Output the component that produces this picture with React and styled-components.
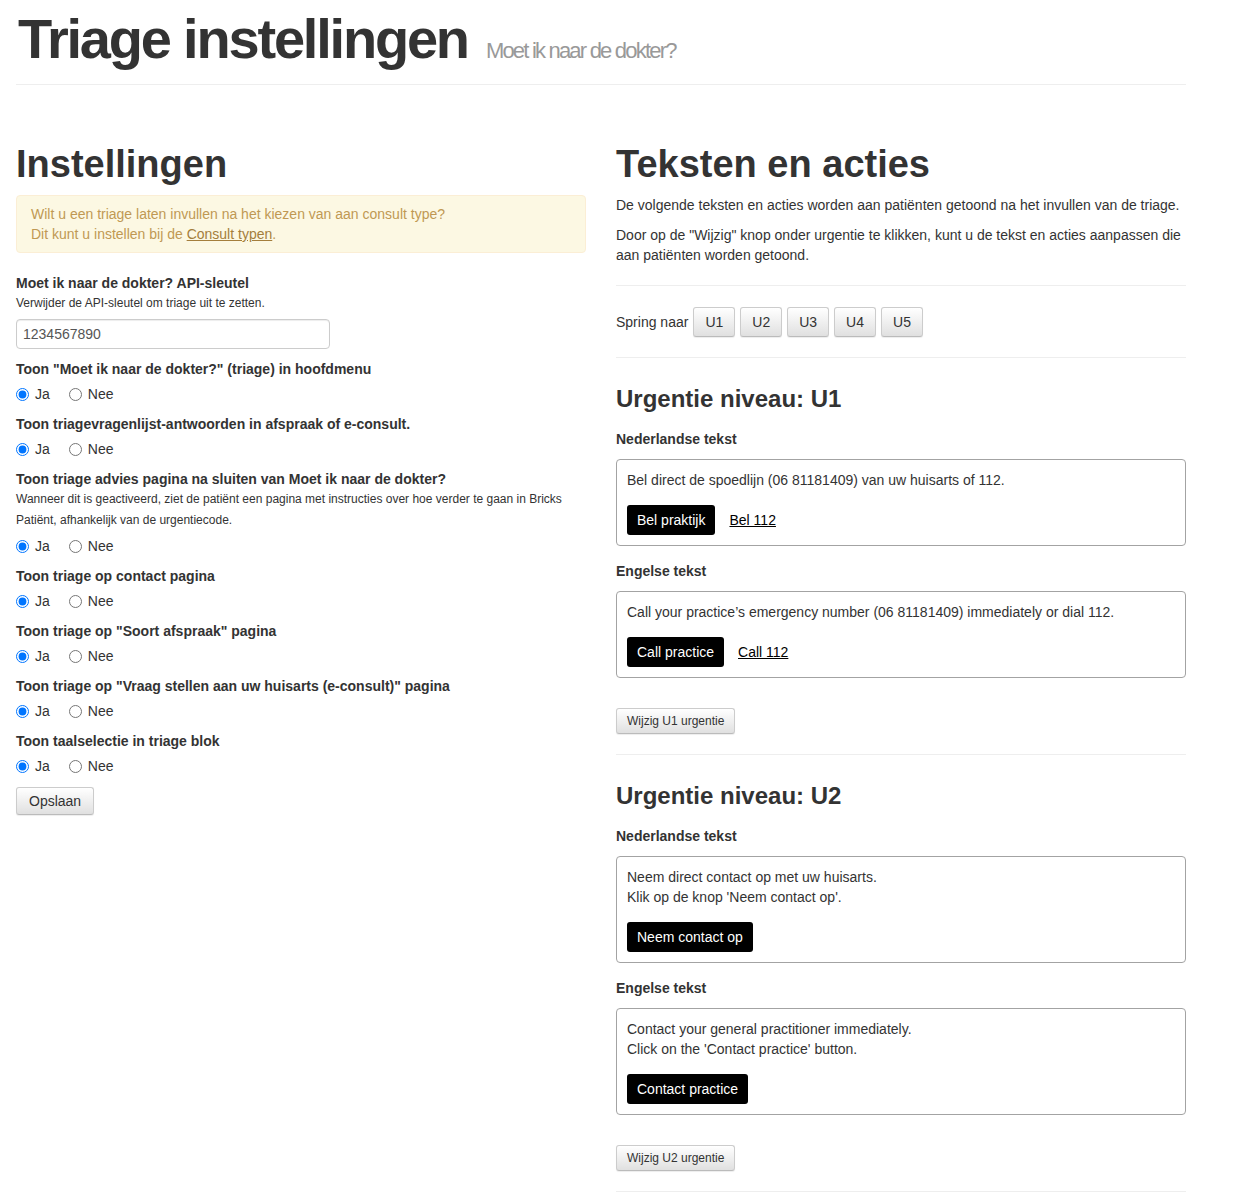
import React from 'react'
import styled, { createGlobalStyle } from 'styled-components'

const GlobalStyle = createGlobalStyle`
  html, body {
    margin: 0;
    padding: 0;
    background: #fff;
  }
  body {
    font-family: "Liberation Sans", Arial, sans-serif;
    font-size: 14px;
    line-height: 20px;
    color: #333;
  }
  * {
    box-sizing: border-box;
  }
`

const Page = styled.div`
  width: 1202px;
  padding: 0 16px;
`

const Header = styled.div`
  margin-top: 10px;
  padding-bottom: 16px;
  border-bottom: 1px solid #eee;
  display: flex;
  align-items: baseline;
  gap: 18px;
`

const Title = styled.h1`
  margin: 0;
  font-size: 56px;
  line-height: 58px;
  font-weight: bold;
  letter-spacing: -2.2px;
  color: #333;
  padding-left: 2px;
`

const Subtitle = styled.small`
  font-size: 22px;
  letter-spacing: -1.8px;
  color: #999;
`

const Columns = styled.div`
  display: grid;
  grid-template-columns: 570px 570px;
  column-gap: 30px;
  margin-top: 58px;
  align-items: start;
`

const Column = styled.div`
  display: flex;
  flex-direction: column;
`

const SectionTitle = styled.h2`
  margin: 0 0 10px;
  font-size: 38px;
  line-height: 42px;
  font-weight: bold;
  color: #333;
`

const Alert = styled.div`
  background: #fcf8e3;
  border: 1px solid #fbeed5;
  border-radius: 4px;
  color: #c09853;
  padding: 8px 14px;
  margin-bottom: 20px;
`

const AlertLink = styled.a`
  color: #a47e3c;
  text-decoration: underline;
`

const Group = styled.div`
  display: flex;
  flex-direction: column;
  gap: 5px;
  margin-bottom: 10px;
`

const LabelBlock = styled.div`
  display: flex;
  flex-direction: column;
`

const Label = styled.label`
  font-weight: bold;
  color: #333;
`

const Help = styled.span`
  font-size: 12px;
  line-height: 21px;
  color: #333;
  padding-right: 8px;
`

const TextInput = styled.input`
  width: 314px;
  height: 30px;
  padding: 0 6px;
  border: 1px solid #ccc;
  border-radius: 4px;
  font-family: inherit;
  font-size: 14px;
  color: #555;
  box-shadow: inset 0 1px 1px rgba(0, 0, 0, 0.075);
`

const RadioRow = styled.div`
  display: flex;
  align-items: center;
  gap: 19px;
  height: 20px;
`

const RadioLabel = styled.label`
  display: flex;
  align-items: center;
  gap: 6px;
  color: #333;

  input {
    margin: 0;
    width: 13px;
    height: 13px;
  }
`

const Button = styled.button`
  align-self: flex-start;
  font-family: inherit;
  font-size: ${p => (p.$small ? '12px' : '14px')};
  line-height: ${p => (p.$small ? '18px' : '20px')};
  padding: ${p => (p.$small ? '3px 10px' : p.$tall ? '4px 11px' : '3px 12px')};
  color: #333;
  background: linear-gradient(to bottom, #fff 0%, #e0e0e0 100%);
  border: 1px solid #ccc;
  border-bottom-color: #bbb;
  border-radius: 3px;
  box-shadow: inset 0 1px 0 rgba(255, 255, 255, 0.15), 0 1px 1px rgba(0, 0, 0, 0.075);
  cursor: pointer;
`

const SaveButton = styled(Button)`
  margin-top: 1px;
`

const Paragraph = styled.p`
  margin: 0 0 10px;
`

const Divider = styled.hr`
  border: 0;
  border-top: 1px solid #eee;
  margin: ${p => p.$margin || '20px 0'};
  width: 100%;
`

const JumpRow = styled.div`
  display: flex;
  align-items: center;
  gap: 5px;
`

const Level = styled.section`
  display: flex;
  flex-direction: column;
`

const LevelTitle = styled.h3`
  margin: 0 0 17px;
  font-size: 24px;
  line-height: 26px;
  font-weight: bold;
  color: #333;
`

const LangLabel = styled.div`
  font-weight: bold;
  margin-bottom: 10px;
`

const Preview = styled.div`
  border: 1px solid #a3a3a3;
  border-radius: 4px;
  padding: 10px;
  margin-bottom: ${p => p.$last ? '30px' : '15px'};
`

const PreviewText = styled.p`
  margin: 0 0 15px;
`

const Actions = styled.div`
  display: flex;
  align-items: center;
  gap: 14px;
`

const ActionButton = styled.button`
  font-family: inherit;
  font-size: 14px;
  line-height: 20px;
  padding: 5px 10px;
  background: #000;
  color: #fff;
  border: 0;
  border-radius: 3px;
`

const ActionLink = styled.a`
  color: #000;
  text-decoration: underline;
`

const settings = [
  { label: 'Toon "Moet ik naar de dokter?" (triage) in hoofdmenu' },
  { label: 'Toon triagevragenlijst-antwoorden in afspraak of e-consult.' },
  {
    label: 'Toon triage advies pagina na sluiten van Moet ik naar de dokter?',
    help: 'Wanneer dit is geactiveerd, ziet de patiënt een pagina met instructies over hoe verder te gaan in Bricks Patiënt, afhankelijk van de urgentiecode.'
  },
  { label: 'Toon triage op contact pagina' },
  { label: 'Toon triage op "Soort afspraak" pagina' },
  { label: 'Toon triage op "Vraag stellen aan uw huisarts (e-consult)" pagina' },
  { label: 'Toon taalselectie in triage blok' }
]

const levels = [
  {
    code: 'U1',
    nl: { text: ['Bel direct de spoedlijn (06 81181409) van uw huisarts of 112.'], button: 'Bel praktijk', link: 'Bel 112' },
    en: { text: ['Call your practice’s emergency number (06 81181409) immediately or dial 112.'], button: 'Call practice', link: 'Call 112' }
  },
  {
    code: 'U2',
    nl: { text: ['Neem direct contact op met uw huisarts.', "Klik op de knop 'Neem contact op'."], button: 'Neem contact op' },
    en: { text: ['Contact your general practitioner immediately.', "Click on the 'Contact practice' button."], button: 'Contact practice' }
  }
]

const PreviewBox = ({ data, last }) => (
  <Preview $last={last}>
    <PreviewText>
      {data.text.map((line, i) => (
        <React.Fragment key={i}>
          {i > 0 && <br />}
          {line}
        </React.Fragment>
      ))}
    </PreviewText>
    <Actions>
      <ActionButton>{data.button}</ActionButton>
      {data.link && <ActionLink href="#">{data.link}</ActionLink>}
    </Actions>
  </Preview>
)

const App = () => (
  <Page>
    <GlobalStyle />
    <Header>
      <Title>Triage instellingen</Title>
      <Subtitle>Moet ik naar de dokter?</Subtitle>
    </Header>

    <Columns>
      <Column>
        <SectionTitle>Instellingen</SectionTitle>
        <Alert>
          Wilt u een triage laten invullen na het kiezen van aan consult type?
          <br />
          Dit kunt u instellen bij de <AlertLink href="#">Consult typen</AlertLink>.
        </Alert>

        <Group>
          <LabelBlock>
            <Label>Moet ik naar de dokter? API-sleutel</Label>
            <Help>Verwijder de API-sleutel om triage uit te zetten.</Help>
          </LabelBlock>
          <TextInput type="text" defaultValue="1234567890" />
        </Group>

        {settings.map((s, i) => (
          <Group key={i}>
            <LabelBlock>
              <Label>{s.label}</Label>
              {s.help && <Help>{s.help}</Help>}
            </LabelBlock>
            <RadioRow>
              <RadioLabel>
                <input type="radio" name={`setting-${i}`} defaultChecked /> Ja
              </RadioLabel>
              <RadioLabel>
                <input type="radio" name={`setting-${i}`} /> Nee
              </RadioLabel>
            </RadioRow>
          </Group>
        ))}

        <SaveButton>Opslaan</SaveButton>
      </Column>

      <Column>
        <SectionTitle>Teksten en acties</SectionTitle>
        <Paragraph>De volgende teksten en acties worden aan patiënten getoond na het invullen van de triage.</Paragraph>
        <Paragraph>
          Door op de "Wijzig" knop onder urgentie te klikken, kunt u de tekst en acties aanpassen die aan patiënten worden getoond.
        </Paragraph>
        <Divider $margin="10px 0 21px" />
        <JumpRow>
          Spring naar
          {['U1', 'U2', 'U3', 'U4', 'U5'].map(u => (
            <Button key={u} $tall>{u}</Button>
          ))}
        </JumpRow>
        <Divider $margin="20px 0 28px" />

        {levels.map((lvl, i) => (
          <Level key={lvl.code}>
            <LevelTitle>Urgentie niveau: {lvl.code}</LevelTitle>
            <LangLabel>Nederlandse tekst</LangLabel>
            <PreviewBox data={lvl.nl} />
            <LangLabel>Engelse tekst</LangLabel>
            <PreviewBox data={lvl.en} last />
            <Button $small>Wijzig {lvl.code} urgentie</Button>
            <Divider $margin={i === levels.length - 1 ? '20px 0 0' : '20px 0 28px'} />
          </Level>
        ))}
      </Column>
    </Columns>
  </Page>
)

export default App
